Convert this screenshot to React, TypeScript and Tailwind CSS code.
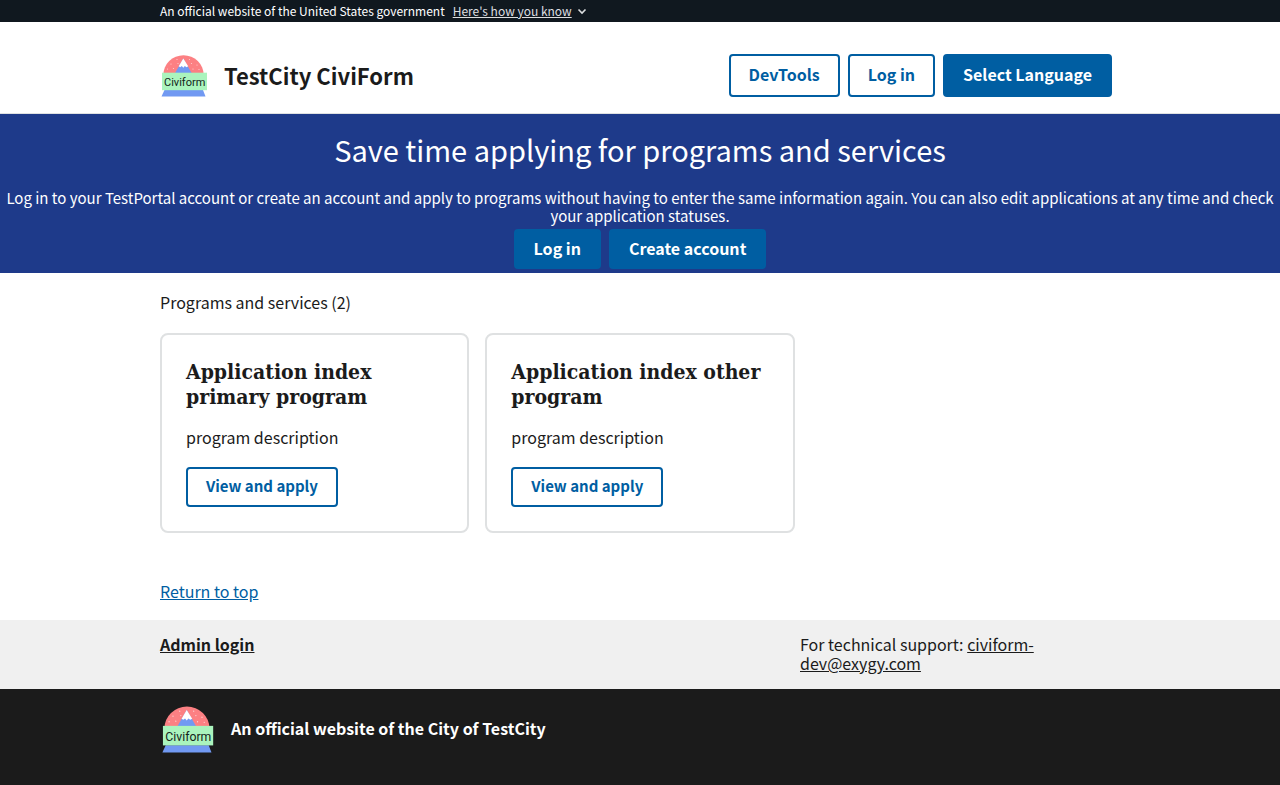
import React from "react";

function Logo({ className }: { className: string }) {
  return (
    <svg viewBox="0 0 48 43" className={className} role="img" aria-label="Civiform logo">
      <path d="M3.300 21a20.200 19.700 0 0 1 40.400 0z" fill="#fc8083" />
      <g fill="#fdd0d2">
        <circle cx="7.500" cy="15" r=".6" />
        <circle cx="11" cy="10" r=".6" />
        <circle cx="13.500" cy="14.500" r=".6" />
        <circle cx="17" cy="5.500" r=".6" />
        <circle cx="18" cy="9.500" r=".6" />
        <circle cx="29.500" cy="5.500" r=".6" />
        <circle cx="31.500" cy="9.500" r=".6" />
        <circle cx="33" cy="15" r=".6" />
        <circle cx="37" cy="11" r=".6" />
        <circle cx="39" cy="15.500" r=".6" />
      </g>
      <path d="M14.500 20 23.300 4.500 32.200 20z" fill="#7199f2" />
      <path d="M23.300 4.500 28.200 12.300 26.500 13.300 24.800 12 23.300 13.800 21.800 12 20.200 13.300 18.700 12.300z" fill="#fff" />
      <path d="M4.500 36h38.500l2.500 6.500H1.500z" fill="#7199f2" />
      <rect x="2" y="18.700" width="45" height="17.500" fill="#aaf4bd" />
      <text x="24.700" y="32" textAnchor="middle" fontSize="11" fontFamily="Roboto, sans-serif" fill="#14241a">
        Civiform
      </text>
    </svg>
  );
}

const buttonBase = "rounded-sm border-2 border-[#005ea2] px-[18px] pb-[3px] leading-4 font-bold";
const outline = "bg-white text-[#005ea2]";
const filled = "bg-[#005ea2] text-white";
const container = "mx-auto w-full max-w-[1024px] px-8";

function ProgramCard({ title }: { title: string }) {
  return (
    <li className="rounded-lg border-2 border-[#dfe1e2] p-6">
      <h3 className="font-['DejaVu_Serif_Condensed','DejaVu_Serif',serif] text-[21px] leading-[25px] font-bold">
        {title}
      </h3>
      <p className="mt-4 text-base leading-6">program description</p>
      <button type="button" className={`${buttonBase} ${outline} mt-[18px] h-10 text-[15px]`}>
        View and apply
      </button>
    </li>
  );
}

export default function App() {
  return (
    <div className="flex min-h-screen flex-col bg-white font-['Noto_Sans_CJK_JP','Noto_Sans',sans-serif] text-[#1b1b1b]">
      <div className="bg-[#10181f] text-xs text-white">
        <div className={`${container} flex h-[22px] items-center gap-2`}>
          <p>An official website of the United States government</p>
          <button type="button" className="flex items-center gap-1 text-[#dcdee0]">
            <span className="underline">Here's how you know</span>
            <svg viewBox="0 0 12 12" className="size-3" fill="none" stroke="currentColor" strokeWidth="1.600">
              <path d="m2.500 4.500 3.500 3.500 3.500-3.500" />
            </svg>
          </button>
        </div>
      </div>

      <header className="border-b border-[#dfe1e2] pt-8 pb-4">
        <div className={`${container} flex items-center justify-between`}>
          <a href="#" className="flex items-center gap-4">
            <Logo className="h-[43px] w-12" />
            <span className="pb-0.5 text-[22px] leading-8 font-bold">TestCity CiviForm</span>
          </a>
          <nav className="flex gap-2 pr-2">
            <button type="button" className={`${buttonBase} ${outline} h-[43px] text-base`}>DevTools</button>
            <button type="button" className={`${buttonBase} ${outline} h-[43px] text-base`}>Log in</button>
            <button type="button" className={`${buttonBase} ${filled} h-[43px] text-base`}>Select Language</button>
          </nav>
        </div>
      </header>

      <main>
        <section className="bg-[#1e3a8a] px-1 pt-4 pb-1 text-center text-white">
          <h1 className="text-[29px] leading-[38px]">Save time applying for programs and services</h1>
          <p className="mt-[21px] text-[15px] leading-[18px]">
            Log in to your TestPortal account or create an account and apply to programs without having to enter the
            same information again. You can also edit applications at any time and check your application statuses.
          </p>
          <div className="mt-1 flex justify-center gap-2">
            <button type="button" className={`${buttonBase} ${filled} h-10 text-base`}>Log in</button>
            <button type="button" className={`${buttonBase} ${filled} h-10 text-base`}>Create account</button>
          </div>
        </section>

        <section className={`${container} pt-[17px]`}>
          <h2 className="text-base leading-6">Programs and services (2)</h2>
          <ul className="mt-[19px] grid grid-cols-3 gap-4">
            <ProgramCard title="Application index primary program" />
            <ProgramCard title="Application index other program" />
          </ul>
        </section>
      </main>

      <footer className="mt-[46px]">
        <div className={`${container} flex pb-4`}>
          <a href="#" className="text-base leading-[25px] text-[#005ea2] underline">Return to top</a>
        </div>
        <div className="bg-[#f0f0f0] pt-[15px] pb-4">
          <div className={`${container} grid grid-cols-3 text-base leading-[19px]`}>
            <a href="#" className="col-span-2 justify-self-start font-bold underline">Admin login</a>
            <p className="pr-12">
              For technical support:{" "}
              <a href="mailto:civiform-dev@exygy.com" className="underline">civiform-dev@exygy.com</a>
            </p>
          </div>
        </div>
        <div className="bg-[#1b1b1b] pt-4 pb-8 text-white">
          <div className={`${container} flex items-center gap-4`}>
            <Logo className="h-12 w-[55px]" />
            <p className="pb-0.5 text-base leading-6 font-bold">An official website of the City of TestCity</p>
          </div>
        </div>
      </footer>
    </div>
  );
}
